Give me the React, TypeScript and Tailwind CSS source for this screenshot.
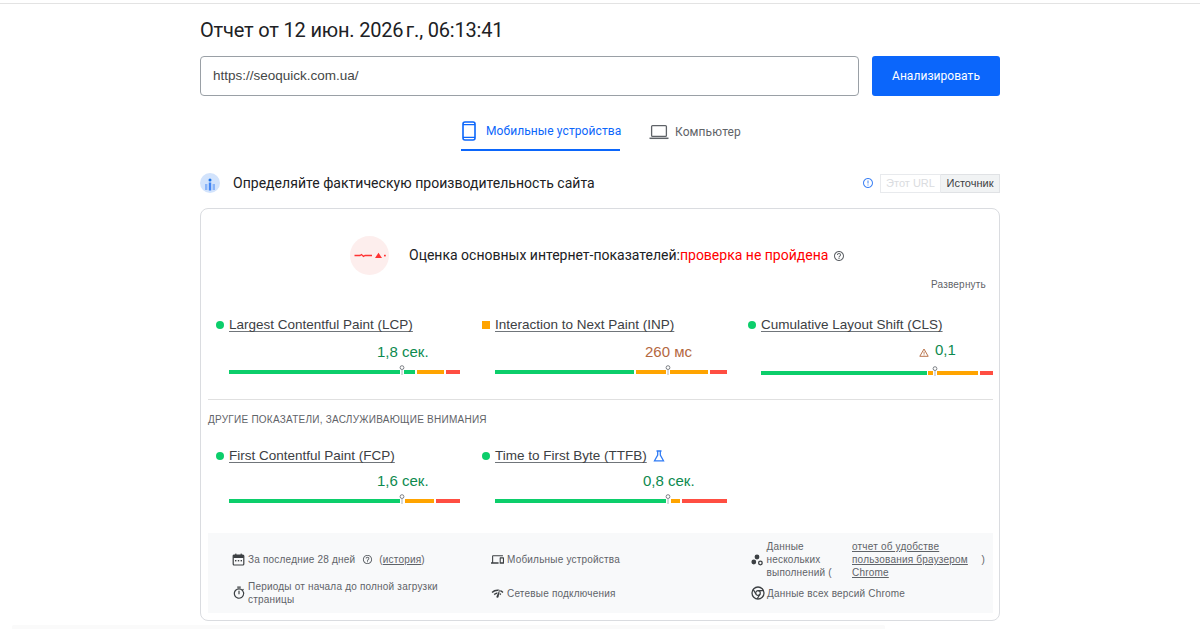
import React from "react";
import {
  MdErrorOutline,
  MdHelpOutline,
  MdOutlineTimer,
  MdOutlineDevices,
  MdOutlineNetworkCheck,
} from "react-icons/md";

const ui = "font-['Roboto','Noto_Sans',sans-serif]";
const arial = "font-['Liberation_Sans',Arial,sans-serif]";

function Marker({ cls }: { cls: string }) {
  return (
    <svg className={`absolute top-[-5px] ${cls}`} width="6" height="10" viewBox="0 0 6 10">
      <rect x="1" y="5" width="4" height="5" fill="#ffffff" />
      <line x1="3" y1="5" x2="3" y2="10" stroke="#9aa0a6" strokeWidth="0.8" />
      <circle cx="3" cy="2.6" r="1.9" fill="#ffffff" stroke="#70757a" strokeWidth="0.9" />
    </svg>
  );
}

function Flask() {
  return (
    <svg className="ml-[6px] text-[#2f7bf5]" width="12" height="12" viewBox="0 0 12 12">
      <path d="M3.5 1 H8.5 M4.7 1 V5 L1.5 10.8 H10.5 L7.3 5 V1" fill="none" stroke="currentColor" strokeWidth="1.3" />
    </svg>
  );
}

function Metric({
  name,
  square,
  flask,
  value,
  valueCls,
  valueColor,
  green,
  orange,
  red,
  marker,
  warn,
  barCls,
  valueMt,
}: {
  name: string;
  square?: boolean;
  flask?: boolean;
  value: string;
  valueCls: string;
  valueColor: string;
  green: string;
  orange: string;
  red: string;
  marker: string;
  warn?: boolean;
  barCls: string;
  valueMt: string;
}) {
  return (
    <div className="flex flex-col">
      <div className="flex items-center h-[18px]">
        <div className="w-[21px] pl-[8px] flex">
          {square ? (
            <span className="w-[8px] h-[8px] bg-[#ffa400]" />
          ) : (
            <span className="w-[8px] h-[8px] rounded-full bg-[#0cce6b]" />
          )}
        </div>
        <span className={`${arial} mt-[1px] text-[13.5px] text-[#3c4043] underline underline-offset-2 decoration-[#70757a]`}>{name}</span>
        {flask && <Flask />}
      </div>
      <div className={`flex items-center h-[20px] ${valueMt} ${arial} text-[15px] ${valueCls} ${valueColor}`}>
        {warn && (
          <svg className="mr-[6px] mt-[4px]" width="10" height="9" viewBox="0 0 10 9">
            <path d="M5 1 L9.2 8.3 H0.8 Z" fill="none" stroke="#b9744c" strokeWidth="1" />
            <rect x="4.6" y="3.6" width="0.9" height="2.3" fill="#b9744c" />
            <rect x="4.6" y="6.4" width="0.9" height="0.9" fill="#b9744c" />
          </svg>
        )}
        <span>{value}</span>
      </div>
      <div className={`relative flex h-[4px] mt-[8px] ${barCls}`}>
        <div className={`${green} bg-[#0cce6b]`} />
        <div className={`${orange} bg-[#ffa400]`} />
        <div className={`${red} bg-[#ff4e42]`} />
        <Marker cls={marker} />
      </div>
    </div>
  );
}

function MultiRuns() {
  return (
    <svg width="12" height="12" viewBox="0 0 12 12" className="shrink-0 text-[#3c4043]">
      <circle cx="6" cy="3" r="2.4" fill="currentColor" />
      <circle cx="2.8" cy="8" r="2.4" fill="currentColor" />
      <circle cx="9.4" cy="9" r="1.8" fill="none" stroke="currentColor" strokeWidth="1.3" />
    </svg>
  );
}

function Calendar() {
  return (
    <svg width="13" height="13" viewBox="0 0 13 13" className="mr-[3px] shrink-0 text-[#3c4043]">
      <rect x="1.2" y="2" width="10.6" height="10" rx="1" fill="none" stroke="currentColor" strokeWidth="1.2" />
      <rect x="1.2" y="2" width="10.6" height="3" fill="currentColor" />
      <rect x="3.2" y="0.6" width="1.2" height="2" fill="currentColor" />
      <rect x="8.6" y="0.6" width="1.2" height="2" fill="currentColor" />
      <rect x="3" y="7" width="1.4" height="1.4" fill="currentColor" />
      <rect x="5.8" y="7" width="1.4" height="1.4" fill="currentColor" />
      <rect x="8.6" y="7" width="1.4" height="1.4" fill="currentColor" />
    </svg>
  );
}

function ChromeOutline() {
  return (
    <svg width="14" height="14" viewBox="0 0 14 14" className="mr-[2px] shrink-0 text-[#3c4043]">
      <circle cx="7" cy="7" r="6" fill="none" stroke="currentColor" strokeWidth="1.3" />
      <circle cx="7" cy="7" r="2.3" fill="none" stroke="currentColor" strokeWidth="1.2" />
      <path d="M7 4.7 H12.6 M5 8.2 L2.2 3.4 M9 8.2 L6.2 12.8" fill="none" stroke="currentColor" strokeWidth="1.2" />
    </svg>
  );
}

export default function App() {
  return (
    <div className="h-[629px] overflow-hidden bg-white relative">
      <div className="h-[4px] border-b border-[#e3e3e3]" />
      <div className="w-[800px] mx-auto">
        <h1 className={`${ui} mt-[12px] h-[28px] leading-[28px] text-[20px] text-[#202124] font-normal tracking-[-0.18px]`}>
          Отчет от 12 июн. 2026{"\u202F"}г., 06:13:41
        </h1>
        <div className="flex mt-[12px] h-[40px] justify-between">
          <input
            readOnly
            value="https://seoquick.com.ua/"
            className={`${arial} w-[659px] h-[40px] border border-[#9aa0a6] rounded-[4px] px-[12px] pb-[1px] text-[13.5px] text-[#444746] outline-none`}
          />
          <button className={`${ui} w-[128px] h-[40px] rounded-[3px] bg-[#0b66fb] text-white text-[12px] font-[450] tracking-[0.05px]`}>
            Анализировать
          </button>
        </div>
        <div className={`${ui} flex pl-[261px] h-[56px] text-[12px] font-[450] tracking-[0.1px]`}>
          <div className="flex items-center h-[55px] w-[159px] border-b-[2px] border-[#0b66fb] text-[#0b66fb] pt-[21px] pb-[4px]">
            <svg width="16" height="20" viewBox="0 0 16 20" className="shrink-0">
              <rect x="2" y="1" width="12" height="18" rx="2" fill="none" stroke="currentColor" strokeWidth="1.6" />
              <path d="M2 3.6 H14 M2 16.4 H14" fill="none" stroke="currentColor" strokeWidth="1.2" />
            </svg>
            <span className="whitespace-nowrap ml-[9px]">Мобильные устройства</span>
          </div>
          <div className="flex items-center h-[55px] ml-[29px] text-[#5f6368] pt-[21px] pb-[4px]">
            <svg width="20" height="16" viewBox="0 0 20 16" className="mr-[6px] text-[#5f6368]">
              <rect x="2.6" y="1.6" width="14.8" height="10.8" rx="1" fill="none" stroke="currentColor" strokeWidth="1.3" />
              <path d="M0.5 14.3 H19.5" fill="none" stroke="currentColor" strokeWidth="1.5" />
            </svg>
            <span>Компьютер</span>
          </div>
        </div>
        <div className="flex items-center h-[20px] mt-[21px]">
          <svg width="20" height="20" viewBox="0 0 20 20">
            <circle cx="10" cy="10" r="10" fill="#d2e3fc" />
            <rect x="5" y="11" width="2.4" height="6" fill="#8ab4f8" />
            <rect x="8.8" y="9.5" width="2.4" height="8" fill="#4285f4" />
            <rect x="12.6" y="11" width="2.4" height="6" fill="#8ab4f8" />
            <circle cx="10" cy="7" r="1.5" fill="#1a73e8" />
          </svg>
          <span className={`${ui} ml-[13px] text-[14px] font-[450] text-[#202124] tracking-[0.03px]`}>
            Определяйте фактическую производительность сайта
          </span>
          <div className="ml-auto flex items-center">
            <MdErrorOutline className="text-[#4285f4] mr-[6px]" size={12} />
            <div className={`${arial} text-[11px] h-[19px] w-[61px] flex items-center justify-center border border-[#e8eaed] text-[#dadce0]`}>
              Этот URL
            </div>
            <div className={`${arial} text-[11px] h-[19px] w-[59px] flex items-center justify-center border border-[#e0e2e5] border-l-0 bg-[#f1f3f4] text-[#3c4043]`}>
              Источник
            </div>
          </div>
        </div>
        <div className="mt-[15px] h-[413px] border border-[#dadce0] rounded-[8px] pl-[7px] pr-[6px] pt-[27px] flex flex-col">
          <div className="flex items-center h-[39px] ml-[142px]">
            <svg width="39" height="39" viewBox="0 0 39 39">
              <circle cx="19.5" cy="19.5" r="19.5" fill="#fdeeed" />
              <path d="M4.5 19.5 H10 L11.5 18.5 L13.5 20.5 L15 19.5 H22" fill="none" stroke="#f33" strokeWidth="1.3" />
              <path d="M25 22 L28.5 16.8 L32 22 Z" fill="#f33" />
              <rect x="34" y="18.8" width="1.8" height="1.6" fill="#f33" />
            </svg>
            <span className={`${ui} ml-[20px] text-[14px] font-[450] text-[#202124]`}>
              Оценка основных интернет-показателей:
            </span>
            <span className={`${ui} text-[14px] font-[450] text-[#f00]`}>проверка не пройдена</span>
            <MdHelpOutline className="ml-[5px] text-[#5f6368]" size={12} />
          </div>
          <div className={`${arial} text-[10px] leading-[13px] h-[13px] mt-[3px] text-right pr-[7px] text-[#5f6368] tracking-[0.2px]`}>
            Развернуть
          </div>
          <div className="grid grid-cols-[266px_266px_254px] mt-[25px] h-[83px]">
            <Metric
              name="Largest Contentful Paint (LCP)"
              value="1,8 сек."
              valueMt="mt-[8px]"
              valueCls="pl-[169px]"
              valueColor="text-[#0d8a4f]"
              green="w-[186px]"
              orange="w-[27px] ml-[2px]"
              red="w-[14px] ml-[2px]"
              marker="left-[170px]"
              barCls="ml-[21px] w-[231px]"
            />
            <Metric
              name="Interaction to Next Paint (INP)"
              square
              value="260 мс"
              valueMt="mt-[8px]"
              valueCls="pl-[171px]"
              valueColor="text-[#b4683f]"
              green="w-[139px]"
              orange="w-[72px] ml-[2px]"
              red="w-[17px] ml-[2px]"
              marker="left-[170px]"
              barCls="ml-[21px] w-[232px]"
            />
            <Metric
              name="Cumulative Layout Shift (CLS)"
              value="0,1"
              valueMt="mt-[6px] mb-[2px]"
              valueCls="pl-[179px]"
              valueColor="text-[#0d8a4f]"
              warn
              green="w-[166px]"
              orange="w-[50px] ml-[1px]"
              red="w-[13px] ml-[2px]"
              marker="left-[171px]"
              barCls="ml-[21px] w-[232px] translate-y-px"
            />
          </div>
          <div className="border-t border-[#e0e0e0] h-[1px]" />
          <div className={`${arial} text-[10px] leading-[13px] mt-[13px] text-[#5f6368] tracking-[0.25px]`}>
            ДРУГИЕ ПОКАЗАТЕЛИ, ЗАСЛУЖИВАЮЩИЕ ВНИМАНИЯ
          </div>
          <div className="grid grid-cols-[266px_266px_254px] mt-[21px] h-[86px]">
            <Metric
              name="First Contentful Paint (FCP)"
              value="1,6 сек."
              valueMt="mt-[6px]"
              valueCls="pl-[169px]"
              valueColor="text-[#0d8a4f]"
              green="w-[171px]"
              orange="w-[29px] ml-[5px]"
              red="w-[24px] ml-[2px]"
              marker="left-[170px]"
              barCls="ml-[21px] w-[231px]"
            />
            <Metric
              name="Time to First Byte (TTFB)"
              flask
              value="0,8 сек."
              valueMt="mt-[6px]"
              valueCls="pl-[169px]"
              valueColor="text-[#0d8a4f]"
              green="w-[171px]"
              orange="w-[9px] ml-[5px]"
              red="w-[45px] ml-[2px]"
              marker="left-[170px]"
              barCls="ml-[21px] w-[232px]"
            />
          </div>
          <div className={`${arial} bg-[#f8f9fa] h-[80px] pl-[24px] py-[7px] text-[10px] leading-[13px] text-[#5f6368] tracking-[0.2px] grid grid-cols-[259px_260px_242px] grid-rows-[39px_26px] gap-y-[1px]`}>
            <div className="flex items-center">
              <Calendar />
              <span>За последние 28 дней</span>
              <MdHelpOutline className="ml-[7px] shrink-0 text-[#5f6368]" size={11} />
              <span className="ml-[6px]">
                (<span className="underline">история</span>)
              </span>
            </div>
            <div className="flex items-center">
              <MdOutlineDevices className="mr-[3px] shrink-0 text-[#3c4043]" size={13} />
              <span>Мобильные устройства</span>
            </div>
            <div className="flex items-center">
              <MultiRuns />
              <span className="w-[85px] ml-[3.5px] shrink-0 self-center">Данные нескольких выполнений (</span>
              <span className="underline w-[122px] shrink-0 ml-[0.5px]">отчет об удобстве пользования браузером Chrome</span>
              <span className="ml-[7.5px]">)</span>
            </div>
            <div className="flex items-center">
              <MdOutlineTimer className="mr-[2px] shrink-0 text-[#3c4043]" size={14} />
              <span className="w-[210px]">Периоды от начала до полной загрузки страницы</span>
            </div>
            <div className="flex items-center">
              <MdOutlineNetworkCheck className="mr-[3px] shrink-0 text-[#3c4043]" size={13} />
              <span>Сетевые подключения</span>
            </div>
            <div className="flex items-center">
              <ChromeOutline />
              <span>Данные всех версий Chrome</span>
            </div>
          </div>
        </div>
      </div>
      <div className="absolute left-[12px] top-[625px] w-[873px] h-[4px] rounded-t-[2px] bg-[#fafafa]" />
    </div>
  );
}
